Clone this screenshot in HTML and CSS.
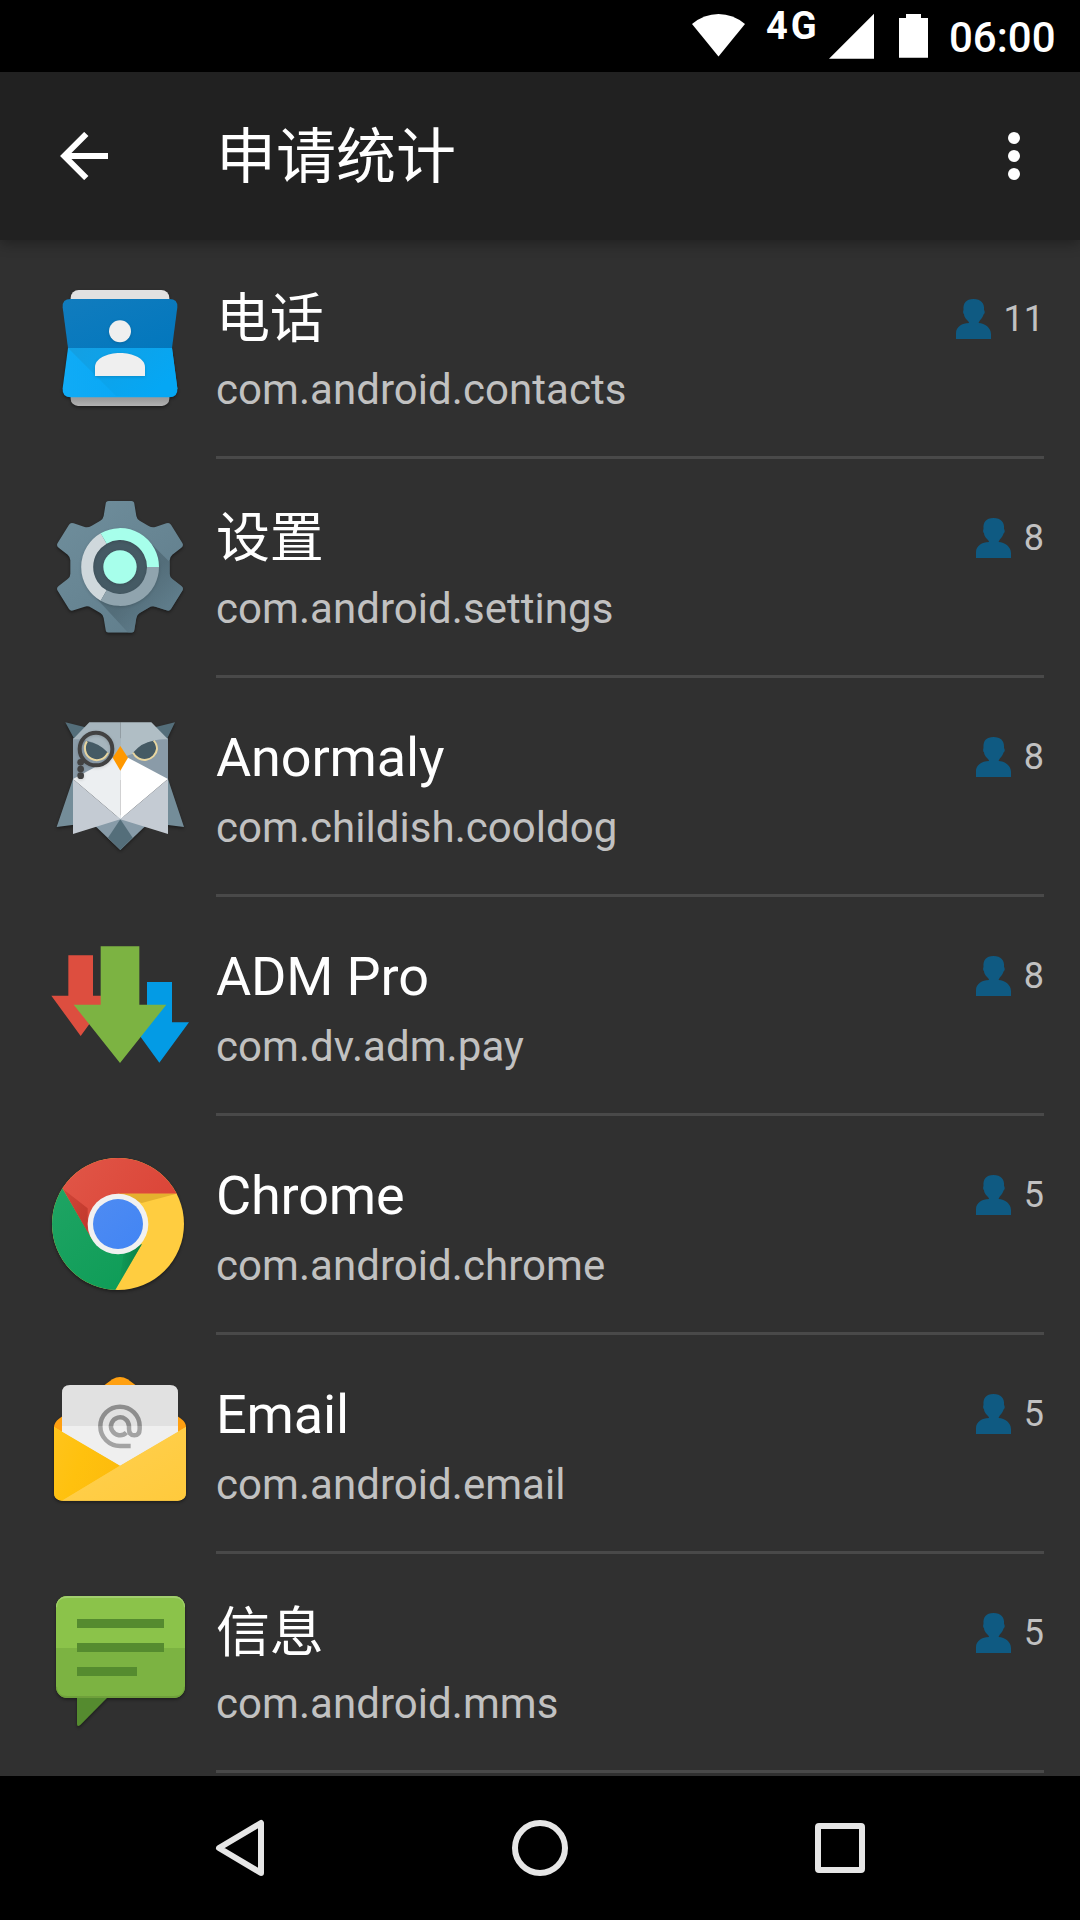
FILE: index.html
```html
<!DOCTYPE html>
<html lang="zh-CN">
<head>
<meta charset="utf-8">
<title>申请统计</title>
<link rel="stylesheet" href="styles.css">
</head>
<body>
<svg width="0" height="0" class="defs" aria-hidden="true">
  <defs>
    <symbol id="person" viewBox="0 0 35 41"><path d="M0 41V35C0 29 6 25 13 25C13 24 12 23 11 22C9 20 8 18 8 16C7 16 7 13 7.500 12C7 5 10 1 17.500 1S28.500 5 28 12C29 13 29 16 27.800 16C27 19 25 21 23.500 23L22.500 25C29 25 35 30 35 36V41Z" fill="#0f5a82"/></symbol>
  </defs>
</svg>
<div class="screen">
  <div class="status-bar">
    <svg class="wifi" viewBox="0 0 53 72"><path d="M0 24Q12 14 26.500 14T53 24L26.500 56.500Z" fill="#fff"/></svg>
    <span class="network">4G</span>
    <svg class="signal" viewBox="0 0 45 72"><path d="M0 58.700L45 13.800V58.700Z" fill="#fff"/></svg>
    <svg class="battery" viewBox="0 0 29 72"><path d="M0 18H7V14H22V18H29V57.700H0Z" fill="#fff"/></svg>
    <span class="clock">06:00</span>
  </div>

  <header class="app-bar">
    <svg class="back" viewBox="0 0 48 48"><path d="M26.300 2L4.300 24L26.300 46M4.500 24H48" fill="none" stroke="#fff" stroke-width="6"/></svg>
    <h1 class="title">申请统计</h1>
    <svg class="more" viewBox="0 0 12 48"><g fill="#fff"><circle cx="6" cy="6" r="6"/><circle cx="6" cy="24" r="6"/><circle cx="6" cy="42" r="6"/></g></svg>
  </header>

  <main class="list">
    <div class="row">
      <svg class="icon" viewBox="0 -12 480 480">
        <defs>
          <linearGradient id="cTop" x2="1" y2="1"><stop stop-color="#117cbe"/><stop offset="1" stop-color="#0277bd"/></linearGradient>
          <linearGradient id="cBot" x2="1"><stop stop-color="#10abf6"/><stop offset="1" stop-color="#03a5f4"/></linearGradient>
          <linearGradient id="cFold" x1="0" y1="0" x2="1" y2=".5"><stop stop-color="#149fe2"/><stop offset="1" stop-color="#05a7f4"/></linearGradient>
          <linearGradient id="cPage" x2="0" y2="1"><stop offset=".9" stop-color="#9c9c9c"/><stop offset="1" stop-color="#b2b2b2"/></linearGradient>
        </defs>
        <g class="cast">
          <rect x="92" y="200" width="296" height="208" rx="22" fill="url(#cPage)"/>
          <rect x="92" y="60" width="296" height="100" rx="24" fill="#e1e1e1"/>
          <path d="M84 234L68 355Q66 382 92 382H388Q414 382 412 355L396 234Z" fill="url(#cBot)"/>
        </g>
        <path d="M84 234L228 378H388Q410 378 412 355L396 234Z" fill="url(#cFold)"/>
        <path d="M84 234L68 112Q66 87 92 87H388Q414 87 412 112L396 234Z" fill="url(#cTop)"/>
        <g fill="#efefef" class="cast-soft"><circle cx="240" cy="184" r="33"/><path d="M165 318V291C165 265 202 249 240 249S315 265 315 291V318Z"/></g>
      </svg>
      <div class="content">
        <div class="text"><div class="name">电话</div><div class="package">com.android.contacts</div></div>
        <div class="count"><svg class="person"><use href="#person"/></svg><span>11</span></div>
      </div>
    </div>

    <div class="row">
      <svg class="icon" viewBox="0 0 480 480">
        <defs>
          <linearGradient id="gear" x2=".8" y2="1"><stop stop-color="#708f9d"/><stop offset="1" stop-color="#607d8b"/></linearGradient>
          <linearGradient id="gearShade" gradientUnits="userSpaceOnUse" x1="240" y1="246" x2="370" y2="376"><stop offset=".45" stop-color="#455c67"/><stop offset="1" stop-color="#5c7987"/></linearGradient>
          <clipPath id="gearClip"><path d="M206 48H274Q282 48 283 56L289 93Q291 103 299 107L326 123Q336 129 346 126L379 115Q388 111 393 119L427 174Q432 182 424 188L397 209Q389 216 389 226V266Q389 276 397 282L424 303Q432 309 427 317L393 372Q388 380 379 376L346 365Q336 362 326 368L299 384Q291 388 289 399L283 435Q282 443 274 443H206Q198 443 197 435L191 399Q189 388 181 384L154 368Q144 362 134 365L101 376Q92 380 87 372L53 317Q48 309 56 303L83 282Q91 276 91 266V226Q91 216 83 209L56 188Q48 182 53 174L87 119Q92 111 101 115L134 126Q144 129 154 123L181 107Q189 103 191 93L197 56Q198 48 206 48Z"/></clipPath>
        </defs>
        <g class="cast"><g clip-path="url(#gearClip)"><rect x="40" y="40" width="400" height="410" fill="url(#gear)"/><path d="M322 164L480 322V460H280L158 328Z" fill="url(#gearShade)" opacity=".55"/></g></g>
        <circle cx="240" cy="246" r="99" fill="#455a64"/>
        <g fill="none" stroke-width="36" class="cast-soft">
          <path d="M191 331.700A99 99 0 0 1 191 160.300" stroke="#cfd8dc"/>
          <path d="M339 246A99 99 0 0 1 191 331.700" stroke="#90a4ae"/>
          <path d="M191 160.300A99 99 0 0 1 339 246" stroke="#a7ffeb"/>
        </g>
        <circle cx="240" cy="246" r="50" fill="#a7ffeb" class="cast-soft"/>
      </svg>
      <div class="content">
        <div class="text"><div class="name">设置</div><div class="package">com.android.settings</div></div>
        <div class="count"><svg class="person"><use href="#person"/></svg><span>8</span></div>
      </div>
    </div>

    <div class="row">
      <svg class="icon" viewBox="0 -3 480 480">
        <g class="cast">
          <path d="M76 52L148 70L104 104Z M405 52L332 70L380 104Z" fill="#546e7a"/>
          <path d="M99 222L50 366L120 357Z M384 222L432 366L360 357Z" fill="#748d99"/>
          <path d="M165 362L241 435L317 362L241 330Z" fill="#879ba8"/>
        </g>
        <path d="M241 343L278 398L241 435L204 398Z" fill="#546e7a"/>
        <path d="M99 100H384V225H99Z" fill="#8a9ba8"/>
        <path d="M148 52H241V158L205 145Q160 98 99 103Z" fill="#a6b5bd"/>
        <path d="M241 52H334L384 103Q320 98 278 146L241 160Z" fill="#b0bec5"/>
        <path d="M99 222L218 158H241V343Z" fill="#eceff1"/>
        <path d="M241 158H264L384 222L241 343Z" fill="#fff"/>
        <path d="M99 222L241 343L99 387Z M384 222L241 343L384 387Z" fill="#c4cbd3"/>
        <path d="M141 109A36 36 0 1 0 204 143Q178 115 141 109Z M341 107Q305 112 279 143A38 38 0 0 0 351 132Q351 117 341 107Z" fill="#455a64"/>
        <path d="M141 109A36 36 0 1 0 204 143M279 143A38 38 0 0 0 351 132Q351 117 341 107" fill="none" stroke="#e8d6a0" stroke-width="6"/>
        <g class="cast-soft"><circle cx="168" cy="132" r="49" fill="none" stroke="#424242" stroke-width="12"/><g fill="#424242"><circle cx="122" cy="172" r="10"/><circle cx="122" cy="192" r="10"/><circle cx="122" cy="212" r="10"/></g></g>
        <path d="M241 123L264 158L241 197L218 158Z" fill="#ff9800"/>
      </svg>
      <div class="content">
        <div class="text"><div class="name">Anormaly</div><div class="package">com.childish.cooldog</div></div>
        <div class="count"><svg class="person"><use href="#person"/></svg><span>8</span></div>
      </div>
    </div>

    <div class="row">
      <svg class="icon" viewBox="0 -21 480 480">
        <path d="M85 76H159V197H210L122 318L34 197H85Z" fill="#dd4e3f"/>
        <path d="M321 156H396V277H447L358 398L270 277H321Z" fill="#039be5"/>
        <path d="M182 49H298V224H379L240 399L101 224H182Z" fill="#7cb342"/>
      </svg>
      <div class="content">
        <div class="text"><div class="name">ADM Pro</div><div class="package">com.dv.adm.pay</div></div>
        <div class="count"><svg class="person"><use href="#person"/></svg><span>8</span></div>
      </div>
    </div>

    <div class="row">
      <svg class="icon" viewBox="0 6 480 480">
        <defs>
          <clipPath id="disc"><circle cx="234" cy="252" r="198"/></clipPath>
          <linearGradient id="chRed" x2="1" y2=".4"><stop stop-color="#e15849"/><stop offset="1" stop-color="#db4437"/></linearGradient>
          <linearGradient id="chGreen" y2="1" x2=".7"><stop stop-color="#21a565"/><stop offset="1" stop-color="#0f9d58"/></linearGradient>
          <linearGradient id="chRedShade" x2="1" y2="1"><stop stop-color="#b93327" stop-opacity=".4"/><stop offset="1" stop-color="#b93327" stop-opacity=".8"/></linearGradient>
          <linearGradient id="chGreenShade"><stop stop-color="#0c7f47" stop-opacity=".1"/><stop offset="1" stop-color="#0c7f47"/></linearGradient>
          <linearGradient id="chBlue" x2="1" y2="1"><stop stop-color="#4e8bf2"/><stop offset="1" stop-color="#4285f4"/></linearGradient>
        </defs>
        <g class="cast"><g clip-path="url(#disc)">
          <rect x="30" y="50" width="410" height="410" fill="#ffcd40"/>
          <path d="M30 50H440V161H234L150 290L68 146Z" fill="url(#chRed)"/>
          <path d="M68 146L156 298L234 343L305 313L226 450L30 460V80Z" fill="url(#chGreen)"/>
          <path d="M68 146L143 205V276Z" fill="url(#chRedShade)"/>
          <path d="M240 161H410L305 189Z" fill="#e5b12e"/>
          <path d="M306 312L237 431L251 340Z" fill="url(#chGreenShade)"/>
        </g></g>
        <circle cx="234" cy="252" r="91" fill="#f1f1f1"/>
        <circle cx="234" cy="252" r="75" fill="url(#chBlue)"/>
      </svg>
      <div class="content">
        <div class="text"><div class="name">Chrome</div><div class="package">com.android.chrome</div></div>
        <div class="count"><svg class="person"><use href="#person"/></svg><span>5</span></div>
      </div>
    </div>

    <div class="row">
      <svg class="icon" viewBox="0 -12 480 480">
        <defs>
          <linearGradient id="mailL" x2="1" y2=".4"><stop stop-color="#ffc41c"/><stop offset=".5" stop-color="#ffc10e"/><stop offset="1" stop-color="#fdbc0d"/></linearGradient>
          <linearGradient id="mailR" x2="1" y2="1"><stop stop-color="#ffd152"/><stop offset="1" stop-color="#ffca3c"/></linearGradient>
          <linearGradient id="at" gradientUnits="userSpaceOnUse" x1="0" y1="117" x2="0" y2="251"><stop offset=".49" stop-color="#8e8e8e"/><stop offset=".5" stop-color="#a3a3a3"/></linearGradient>
        </defs>
        <g class="cast">
          <path d="M42 186Q43 172 56 162L217 43Q240 29 263 43L424 162Q438 173 438 186V250H42Z" fill="#ffa011"/>
          <path d="M42 186L240 302L438 186V382Q438 407 413 407H67Q42 407 42 382Z" fill="#ffca3e"/>
        </g>
        <path d="M66 201V84Q66 60 90 60H390Q414 60 414 84V201L240 303Z" fill="#e1e1e1"/>
        <path d="M66 183H414V201L240 303L66 201Z" fill="#efefef"/>
        <path d="M272 243H240A59 59 0 1 1 299 184V191Q299 211 283 211Q267 211 267 191V184A27 27 0 1 0 259 203" fill="none" stroke="url(#at)" stroke-width="13.500"/>
        <path d="M42 186L240 302L66 407Q42 406 42 382Z" fill="url(#mailL)"/>
        <path d="M438 186V382Q438 407 413 407H66L240 302Z" fill="url(#mailR)"/>
      </svg>
      <div class="content">
        <div class="text"><div class="name">Email</div><div class="package">com.android.email</div></div>
        <div class="count"><svg class="person"><use href="#person"/></svg><span>5</span></div>
      </div>
    </div>

    <div class="row">
      <svg class="icon" viewBox="0 0 480 480">
        <defs><clipPath id="bubble"><rect x="48" y="48" width="387" height="306" rx="34"/></clipPath></defs>
        <g class="cast">
          <path d="M111 340H215L121 435Q111 442 111 432Z" fill="#558b2f"/>
          <rect x="48" y="48" width="387" height="306" rx="34" fill="#7cb342"/>
        </g>
        <g clip-path="url(#bubble)">
          <rect x="48" y="48" width="387" height="156" fill="#8bc34a"/>
          <path d="M48 82Q48 51 82 51H401Q435 51 435 82" fill="none" stroke="#a2cf6e" stroke-width="6"/>
          <path d="M48 320Q48 351 82 351H401Q435 351 435 320" fill="none" stroke="#6fa03b" stroke-width="6"/>
        </g>
        <path d="M111 117H372V144H111ZM111 189H372V216H111ZM111 261H291V288H111Z" fill="#558b2f"/>
      </svg>
      <div class="content">
        <div class="text"><div class="name">信息</div><div class="package">com.android.mms</div></div>
        <div class="count"><svg class="person"><use href="#person"/></svg><span>5</span></div>
      </div>
    </div>
  </main>

  <nav class="nav-bar">
    <svg class="nav-icon" viewBox="0 0 60 60"><path d="M51 5V55L9 30Z" fill="none" stroke="#e6e6e6" stroke-width="6" stroke-linejoin="round"/></svg>
    <svg class="nav-icon" viewBox="0 0 60 60"><circle cx="30" cy="30" r="25" fill="none" stroke="#e6e6e6" stroke-width="6"/></svg>
    <svg class="nav-icon" viewBox="0 0 60 60"><rect x="8" y="8" width="44" height="44" rx="1" fill="none" stroke="#e6e6e6" stroke-width="6" stroke-linejoin="round"/></svg>
  </nav>
</div>
</body>
</html>
```

FILE: styles.css
```css
* { box-sizing: border-box; }
body {
  margin: 0;
  background: #000;
  color: #fff;
  font-family: Roboto, "Noto Sans CJK SC", sans-serif;
}
svg { display: block; flex: none; }
.defs { display: none; }
.screen {
  display: flex;
  flex-direction: column;
  width: 1080px;
  height: 1920px;
  overflow: hidden;
}
.status-bar {
  display: flex;
  justify-content: flex-end;
  height: 72px;
  padding-right: 24px;
  flex: none;
}
.wifi { width: 53px; height: 72px; }
.network {
  width: 62px;
  margin-left: 21px;
  font-size: 38px;
  font-weight: 700;
  line-height: 53px;
  letter-spacing: 3px;
}
.signal { width: 45px; height: 72px; margin-left: 1px; }
.battery { width: 29px; height: 72px; margin-left: 25px; }
.clock {
  width: 107px;
  margin-left: 21px;
  font-size: 42px;
  font-weight: 500;
  line-height: 76px;
}
.app-bar {
  display: flex;
  align-items: center;
  flex: none;
  height: 168px;
  padding: 0 60px;
  background: #212121;
  box-shadow: 0 4px 12px rgba(0, 0, 0, .3);
  z-index: 1;
}
.back { width: 48px; height: 48px; }
.title {
  flex: 1;
  margin: 0 0 0 108px;
  padding-top: 4px;
  font-size: 60px;
  font-weight: 400;
  line-height: 84px;
}
.more { width: 12px; height: 48px; }
.list {
  flex: 1;
  min-height: 0;
  overflow: hidden;
  background: #303030;
}
.row {
  display: flex;
  height: 219px;
  padding: 0 36px 0 40px;
  gap: 16px;
}
.icon { width: 160px; height: 160px; margin-top: 26px; overflow: visible; }
.cast { filter: drop-shadow(0 5px 5px rgba(0, 0, 0, .4)); }
.cast-soft { filter: drop-shadow(0 3px 4px rgba(0, 0, 0, .15)); }
.content {
  display: flex;
  justify-content: space-between;
  flex: 1;
  border-bottom: 3px solid #494949;
}
.text { padding-top: 44px; white-space: nowrap; }
.name {
  height: 72px;
  font-size: 54px;
  line-height: 72px;
  letter-spacing: -.15px;
}
.package {
  padding-top: 7px;
  font-size: 42px;
  line-height: 54px;
  letter-spacing: .05px;
  color: #c1c1c1;
}
.count {
  display: flex;
  gap: 13px;
  height: 42px;
  margin-top: 58px;
  font-size: 36px;
  line-height: 43px;
  color: #c1c1c1;
}
.person { width: 35px; height: 41px; }
.nav-bar {
  display: flex;
  justify-content: space-between;
  align-items: center;
  flex: none;
  height: 144px;
  padding: 0 210px;
}
.nav-icon { width: 60px; height: 60px; }
```
